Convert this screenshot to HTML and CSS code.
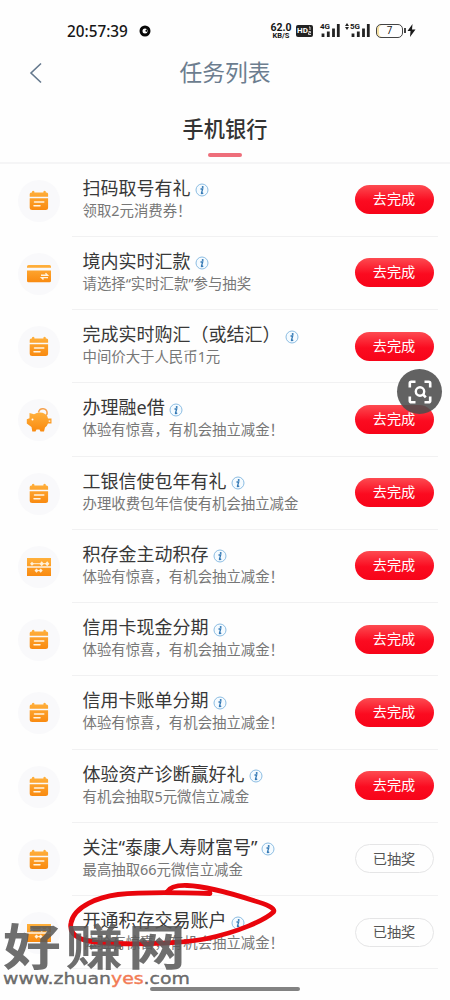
FILE: index.html
```html
<!DOCTYPE html>
<html lang="zh-CN">
<head>
<meta charset="utf-8">
<title>任务列表</title>
<link rel="stylesheet" href="styles.css">
</head>
<body>
<svg class="defs" width="0" height="0">
  <defs>
    <linearGradient id="orange" x1="0" y1="0" x2="0" y2="1"><stop offset="0" stop-color="#ffb03c"/><stop offset="1" stop-color="#f98a10"/></linearGradient>
    <symbol id="calendar" viewBox="0 0 26 26">
      <path fill="url(#orange)" d="M3.700 8.800V6Q3.700 4.500 5.200 4.500H6V3.600q1.200-1.500 2.400 0v.9h9V3.600q1.200-1.500 2.400 0v.9h.8q1.500 0 1.500 1.500v2.800zM3.700 10.300h18.400v9.200Q22.100 22 19.600 22H6.200Q3.700 22 3.700 19.500z"/>
      <path d="M8.500 14.100h9.300M8 17.700h6" stroke="#fff3df" stroke-width="1.500" stroke-linecap="round"/>
    </symbol>
    <symbol id="card" viewBox="0 0 26 26">
      <path fill="url(#orange)" d="M1 6.800V5.500Q1 4 2.500 4h21Q25 4 25 5.500v1.300zM1 9.500h24v10.300q0 1.500-1.500 1.500h-21Q1 21.300 1 19.800z"/>
      <path d="M15 14.300h6.500l-2-2M22 16.600h-6.500l2 2" fill="none" stroke="#fff3df" stroke-width="1.400"/>
    </symbol>
    <symbol id="piggy" viewBox="0 0 26 26">
      <path d="M12.500 5.500q.8-4 4.600-3.800 4 .3 4 4.300 0 1.500-1 2.500" fill="none" stroke="#f5a04b" stroke-width="1.500"/>
      <path fill="url(#orange)" d="M3.500 6 8 7.200Q12 4.500 16.500 5.800q4.800 1.500 5.500 5.700h3.500v5H22q-.8 2.500-3 4l-1 4h-3.500l-1-2h-3l-1 2H6.300L5.500 20 .8 16.500v-4.300l2.700-1z"/>
      <path d="M22.700 13.300h1.600v1.700h-1.600z" fill="#ffe5c5"/><circle cx="6.500" cy="12.500" r="1" fill="#fff"/>
    </symbol>
    <symbol id="ticket" viewBox="0 0 26 26">
      <path fill="url(#orange)" d="M1 4h24v8.500H1zM1 13.500h24V22H1z"/>
      <path d="M1 13h24M5 9.700h16M9 16.600h7" stroke="#fff0da" stroke-width="1"/>
      <path d="M4 9.700l2-2 2 2-2 2zM13.500 9.700l2.200-2.500 2.200 2.500-2.200 2.500zM19 9.700l2.200-2.500 2.200 2.500-2.200 2.500zM8.500 16.600l2-2.200 2 2.200-2 2.200zM12.700 16.600l2-2.200 2 2.200-2 2.200z" fill="#fff0da"/>
    </symbol>
    <symbol id="info" viewBox="0 0 14 14">
      <circle cx="7" cy="7" r="6" fill="#f5fbff" stroke="#80b6df" stroke-width=".9"/>
      <circle cx="7.700" cy="3.900" r="1" fill="#3479b5"/>
      <path d="M5.500 6h2.200L6.400 10.300q0 .7 1.800-.4" fill="none" stroke="#3479b5" stroke-width="1.300"/>
    </symbol>
  </defs>
</svg>
<main class="screen">
  <header class="status">
    <span class="clock">20:57:39</span>
    <svg class="dot" width="12" height="12" viewBox="0 0 12 12"><circle cx="6" cy="6" r="4" fill="none" stroke="#080808" stroke-width="3"/><path d="M6 6l2-2v3z" fill="#080808"/></svg>
    <span class="speed"><b>62.0</b><small>KB/S</small></span>
    <span class="hd">HD<svg width="4" height="9" viewBox="0 0 4 9"><path d="M1 1h1v3M.5 5.500h2v1.300h-2V8.500h2.500" fill="none" stroke="#fff" stroke-width=".8"/></svg></span>
    <span class="signal"><svg width="20" height="15" viewBox="0 0 20 15"><path d="M3 14v-3.500M8.300 14V8.500M13.500 14V5.500M18.300 14V1" stroke="#222" stroke-width="2.800"/></svg><i>4G</i></span>
    <span class="signal second"><svg class="arrows" width="4" height="7" viewBox="0 0 4 7"><path d="M0 3l2-3 2 3zM0 4h4L2 7z" fill="#222"/></svg><svg width="20" height="15" viewBox="0 0 20 15"><path d="M3 14v-3.500M8.300 14V8.500M13.500 14V5.500M18.300 14V1" stroke="#222" stroke-width="2.800"/></svg><i>5G</i></span>
    <span class="battery">7</span>
    <svg class="bolt" width="9" height="13" viewBox="0 0 9 13"><path d="M5.500 0 .5 7h3L3 13l5.500-7.500H5z" fill="#1b1b1b"/></svg>
  </header>
  <nav class="titlebar">
    <svg class="back" width="14" height="22" viewBox="0 0 14 22"><path d="M12 1.500 2 11l10 9.500" fill="none" stroke="#64788d" stroke-width="1.600"/></svg>
    <h1>任务列表</h1>
  </nav>
  <div class="tabs"><span class="tab">手机银行</span></div>
  <ul class="tasks">
    <li class="task"><span class="badge"><svg><use href="#calendar"/></svg></span><div class="body"><div class="copy"><h2>扫码取号有礼<svg><use href="#info"/></svg></h2><p>领取2元消费券！</p></div><button class="go">去完成</button></div></li>
    <li class="task"><span class="badge"><svg><use href="#card"/></svg></span><div class="body"><div class="copy"><h2>境内实时汇款<svg><use href="#info"/></svg></h2><p>请选择“实时汇款”参与抽奖</p></div><button class="go">去完成</button></div></li>
    <li class="task"><span class="badge"><svg><use href="#calendar"/></svg></span><div class="body"><div class="copy"><h2>完成实时购汇（或结汇）<svg><use href="#info"/></svg></h2><p>中间价大于人民币1元</p></div><button class="go">去完成</button></div></li>
    <li class="task"><span class="badge"><svg><use href="#piggy"/></svg></span><div class="body"><div class="copy"><h2>办理融e借<svg><use href="#info"/></svg></h2><p>体验有惊喜，有机会抽立减金！</p></div><button class="go">去完成</button></div></li>
    <li class="task"><span class="badge"><svg><use href="#calendar"/></svg></span><div class="body"><div class="copy"><h2>工银信使包年有礼<svg><use href="#info"/></svg></h2><p>办理收费包年信使有机会抽立减金</p></div><button class="go">去完成</button></div></li>
    <li class="task"><span class="badge"><svg><use href="#ticket"/></svg></span><div class="body"><div class="copy"><h2>积存金主动积存<svg><use href="#info"/></svg></h2><p>体验有惊喜，有机会抽立减金！</p></div><button class="go">去完成</button></div></li>
    <li class="task"><span class="badge"><svg><use href="#calendar"/></svg></span><div class="body"><div class="copy"><h2>信用卡现金分期<svg><use href="#info"/></svg></h2><p>体验有惊喜，有机会抽立减金！</p></div><button class="go">去完成</button></div></li>
    <li class="task"><span class="badge"><svg><use href="#calendar"/></svg></span><div class="body"><div class="copy"><h2>信用卡账单分期<svg><use href="#info"/></svg></h2><p>体验有惊喜，有机会抽立减金！</p></div><button class="go">去完成</button></div></li>
    <li class="task"><span class="badge"><svg><use href="#calendar"/></svg></span><div class="body"><div class="copy"><h2>体验资产诊断赢好礼<svg><use href="#info"/></svg></h2><p>有机会抽取5元微信立减金</p></div><button class="go">去完成</button></div></li>
    <li class="task"><span class="badge"><svg><use href="#calendar"/></svg></span><div class="body"><div class="copy"><h2>关注“泰康人寿财富号”<svg><use href="#info"/></svg></h2><p>最高抽取66元微信立减金</p></div><button class="go done">已抽奖</button></div></li>
    <li class="task"><span class="badge"><svg><use href="#ticket"/></svg></span><div class="body"><div class="copy"><h2>开通积存交易账户<svg><use href="#info"/></svg></h2><p>体验有惊喜，有机会抽立减金！</p></div><button class="go done">已抽奖</button></div></li>
  </ul>
  <div class="home"></div>
  <div class="scan"><svg width="24" height="24" viewBox="0 0 24 24" fill="none" stroke="#fff" stroke-width="2.600"><path d="M1.800 7.500V3.300q0-1.500 1.500-1.500h4.200M16.500 1.800h4.200q1.500 0 1.500 1.500v4.200M22.200 16.500v4.200q0 1.500-1.500 1.500h-4.200M7.500 22.200H3.300q-1.500 0-1.500-1.500v-4.200"/><circle cx="12" cy="11.500" r="4.200" stroke-width="2.400"/><path d="m15 14.500 2.800 2.800"/></svg></div>
  <svg class="scribble" width="220" height="80" viewBox="60 880 220 80" fill="none" stroke="#e9050c" stroke-linecap="round" stroke-linejoin="round">
    <path stroke-width="4.800" d="M210 893.500C170 892 140 892 118 894.500C99 897 74 906 71 923C68 938 85 943 116 943.500C145 944.500 184 943 205 939C239 932 265 920 273.500 912C276 908 265 904 255 901C235 894.500 205 886 187 885.500Q171 885 167 892"/>
  </svg>
  <div class="watermark"><strong>好赚网</strong><span>www.zhuan<em>yes</em>.com</span></div>
</main>
</body>
</html>
```
FILE: styles.css
```css
* { box-sizing: border-box; }
body { margin: 0; background: #fefefe; font-family: "Noto Sans", "Noto Sans CJK SC", sans-serif; }
h1, h2, p, ul { margin: 0; padding: 0; font-weight: 400; }
.defs { position: absolute; }
.screen { position: relative; width: 450px; height: 1000px; overflow: hidden; display: flex; flex-direction: column; }
.status { height: 48px; padding: 13px 34px 0 67px; display: flex; align-items: center; color: #161616; }
.clock { width: 62px; font: 500 15.300px/20px "Noto Sans", sans-serif; white-space: nowrap; }
.dot { margin-left: 10px; }
.speed { width: 22px; margin-left: 119px; display: flex; flex-direction: column; align-items: center; }
.speed b { font: 700 10.500px/9px Roboto, sans-serif; }
.speed small { font: 700 7.500px/7px Roboto, sans-serif; }
.hd { margin-left: 4px; width: 17px; height: 12px; display: flex; align-items: center; justify-content: center; border-radius: 2px; background: #222; color: #fff; font: 700 8px/12px Roboto, sans-serif; }
.signal { position: relative; display: flex; margin-left: 7px; }
.signal i { position: absolute; top: -1px; left: 0; font: 700 8px/9px Roboto, sans-serif; }
.signal.second { margin-left: 5px; }
.signal.second i { left: 5px; }
.arrows { margin-right: 1px; }
.battery { position: relative; flex: none; width: 27px; height: 14px; margin-left: 6px; border: 1.500px solid #444; border-radius: 5px; text-align: center; font: 400 10px/11px Roboto, sans-serif; box-shadow: inset 2px 0 #f8e3a4; }
.battery::after { content: ""; position: absolute; right: -3.500px; top: 3px; width: 1.500px; height: 5px; background: #444; }
.bolt { flex: none; margin-left: 4px; }
.titlebar { height: 50px; display: grid; grid-template-columns: 1fr auto 1fr; align-items: center; }
.back { margin-left: 28.500px; }
h1 { color: #6c7d8f; font-size: 22.800px; line-height: 34px; }
.tabs { height: 65.500px; display: flex; justify-content: center; border-bottom: 2px solid #f5f5f6; }
.tab { display: flex; flex-direction: column; align-items: center; padding-top: 15px; color: #333; font-size: 21.200px; line-height: 31px; font-weight: 500; }
.tab::after { content: ""; width: 34px; height: 4px; margin-top: 9px; border-radius: 2px; background: #ee6e7a; }
.tasks { list-style: none; }
.task { height: 73.250px; display: flex; padding-right: 12px; }
.badge { width: 42px; height: 42px; margin: 16px 12px 0 18px; flex: none; display: flex; align-items: center; justify-content: center; border-radius: 50%; background: #f9f9fb; }
.badge svg { width: 26px; height: 26px; }
.body { flex: 1; display: flex; justify-content: space-between; padding: 12px 4.500px 0 10.500px; border-bottom: 1.500px solid #f1f1f2; }
.copy { white-space: nowrap; }
h2 { display: flex; align-items: center; color: #383838; font-size: 18px; line-height: 25px; }
h2 svg { width: 14px; height: 14px; margin: 4px 0 0 4px; }
.copy p { color: #777; font-size: 14.400px; line-height: 20px; }
.go { width: 79px; height: 29px; margin-top: 9.500px; padding: 0 0 1px; flex: none; border: 0; border-radius: 15px; background: linear-gradient(#fd4b51, #fb0b20 55%, #f70419); color: #fff; font: 400 14.200px/28px "Noto Sans", "Noto Sans CJK SC", sans-serif; }
.go.done { border: 1.500px solid #e5e5e6; background: #fefefe; color: #555; font-weight: 400; line-height: 25px; }
.home { position: absolute; left: 150px; top: 987px; width: 150px; height: 4px; border-radius: 2px; background: #828282; }
.scan { position: absolute; left: 397px; top: 369px; width: 45px; height: 45px; display: flex; align-items: center; justify-content: center; border-radius: 50%; background: rgba(76, 76, 76, .88); }
.scribble { position: absolute; left: 60px; top: 880px; }
.watermark { position: absolute; left: 3px; top: 918px; color: rgba(88, 88, 88, .87); white-space: nowrap; }
.watermark strong { display: block; width: max-content; height: 52px; font: 700 49px/52px "Noto Sans CJK SC", sans-serif; letter-spacing: 4px; transform: scaleX(1.18); transform-origin: 0 50%; }
.watermark span { display: block; width: max-content; font: 400 16px/17px "DejaVu Sans", sans-serif; -webkit-text-stroke: .4px; transform: scaleX(1.18); transform-origin: 0 50%; }
.watermark em { font-style: normal; color: #f27b55; }
```
